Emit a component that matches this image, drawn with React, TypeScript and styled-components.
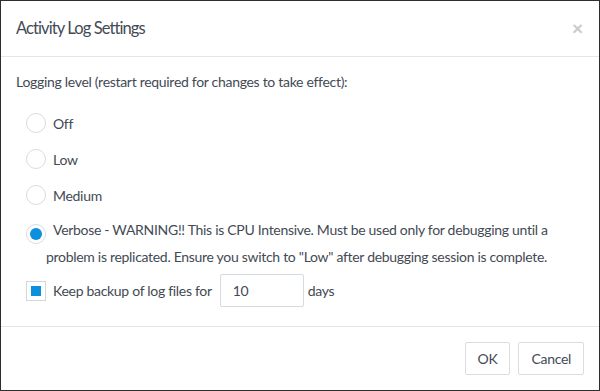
import React, { useState } from "react";
import styled, { createGlobalStyle } from "styled-components";

const GlobalStyle = createGlobalStyle`
  html, body {
    margin: 0;
    padding: 0;
    background: #ffffff;
  }
  * {
    box-sizing: border-box;
  }
`;

const Dialog = styled.div`
  width: 600px;
  height: 391px;
  display: flex;
  flex-direction: column;
  border: 1px solid #2d2d2d;
  background: #ffffff;
  font-family: Lato, "Open Sans", sans-serif;
  color: #434a54;
`;

const Header = styled.div`
  display: flex;
  justify-content: space-between;
  align-items: center;
  padding: 15px;
  border-bottom: 1px solid #e5e5e5;
`;

const Title = styled.h4`
  margin: 0;
  font-size: 16.5px;
  font-weight: 400;
  letter-spacing: -0.9px;
  line-height: 25px;
`;

const CloseButton = styled.button`
  border: none;
  background: transparent;
  padding: 0;
  margin: 0 1px 0 0;
  font-family: "Liberation Sans", sans-serif;
  font-size: 19px;
  font-weight: 700;
  line-height: 1;
  color: #000;
  opacity: 0.2;
  cursor: pointer;
`;

const Body = styled.div`
  flex: 1;
  padding: 15px;
  font-size: 14px;
  letter-spacing: -0.3px;
`;

const Intro = styled.p`
  margin: 0;
  line-height: 20px;
`;

const OptionList = styled.div`
  display: flex;
  flex-direction: column;
  padding: 13px 0 0 10px;
`;

const OptionRow = styled.label`
  display: flex;
  align-items: center;
  height: 36px;
  cursor: pointer;
`;

const WrapRow = styled.label`
  display: block;
  margin: 4px 0 0 10px;
  padding-left: 20px;
  line-height: 26px;
  cursor: pointer;
`;

const RadioCircle = styled.span<{ $checked?: boolean; $inline?: boolean }>`
  display: inline-flex;
  align-items: center;
  justify-content: center;
  flex: none;
  width: 20px;
  height: 20px;
  border-radius: 50%;
  border: 1px solid #d6dde2;
  background: #ffffff;
  margin-right: 7px;
  margin-left: ${(p) => (p.$inline ? "-20px" : "0")};
  vertical-align: -5px;

  &::after {
    content: "";
    width: 12px;
    height: 12px;
    border-radius: 50%;
    background: ${(p) => (p.$checked ? "#0c8fdc" : "transparent")};
  }
`;

const BackupRow = styled.div`
  display: flex;
  align-items: center;
  margin: 4px 0 0 10px;
  height: 33px;
`;

const CheckBox = styled.span<{ $checked?: boolean }>`
  display: inline-flex;
  align-items: center;
  justify-content: center;
  width: 20px;
  height: 20px;
  border: 1px solid #d0d8dd;
  margin-right: 7px;
  cursor: pointer;

  &::after {
    content: "";
    width: 10px;
    height: 10px;
    background: ${(p) => (p.$checked ? "#0c8fdc" : "transparent")};
  }
`;

const DaysInput = styled.input`
  width: 84px;
  height: 33px;
  margin: 0 4px 0 8px;
  padding: 6px 12px;
  border: 1px solid #d3dbe0;
  border-radius: 2px;
  font-family: inherit;
  font-size: 14px;
  letter-spacing: -0.3px;
  color: #434a54;
  outline: none;
`;

const Footer = styled.div`
  display: flex;
  justify-content: flex-end;
  gap: 8px;
  padding: 15px;
  border-top: 1px solid #e5e5e5;
`;

const Button = styled.button`
  height: 33px;
  padding: 0 12px;
  border: 1px solid #dcdcdc;
  border-radius: 2px;
  background: #ffffff;
  font-family: inherit;
  font-size: 14px;
  letter-spacing: -0.3px;
  color: #434a54;
  cursor: pointer;
`;

const levels = ["Off", "Low", "Medium"];

const App: React.FC = () => {
  const [level, setLevel] = useState<string>("Verbose");
  const [keepBackup, setKeepBackup] = useState<boolean>(true);
  const [days, setDays] = useState<string>("10");

  return (
    <>
      <GlobalStyle />
      <Dialog>
        <Header>
          <Title>Activity Log Settings</Title>
          <CloseButton aria-label="Close">×</CloseButton>
        </Header>

        <Body>
          <Intro>Logging level (restart required for changes to take effect):</Intro>
          <OptionList>
            {levels.map((l) => (
              <OptionRow key={l} onClick={() => setLevel(l)}>
                <RadioCircle $checked={level === l} />
                {l}
              </OptionRow>
            ))}
          </OptionList>
          <WrapRow onClick={() => setLevel("Verbose")}>
            <RadioCircle $inline $checked={level === "Verbose"} />
            Verbose - WARNING!! This is CPU Intensive. Must be used only for debugging until a
            problem is replicated. Ensure you switch to "Low" after debugging session is complete.
          </WrapRow>
          <BackupRow>
            <CheckBox $checked={keepBackup} onClick={() => setKeepBackup(!keepBackup)} />
            Keep backup of log files for
            <DaysInput value={days} onChange={(e) => setDays(e.target.value)} />
            days
          </BackupRow>
        </Body>

        <Footer>
          <Button>OK</Button>
          <Button>Cancel</Button>
        </Footer>
      </Dialog>
    </>
  );
};

export default App;
